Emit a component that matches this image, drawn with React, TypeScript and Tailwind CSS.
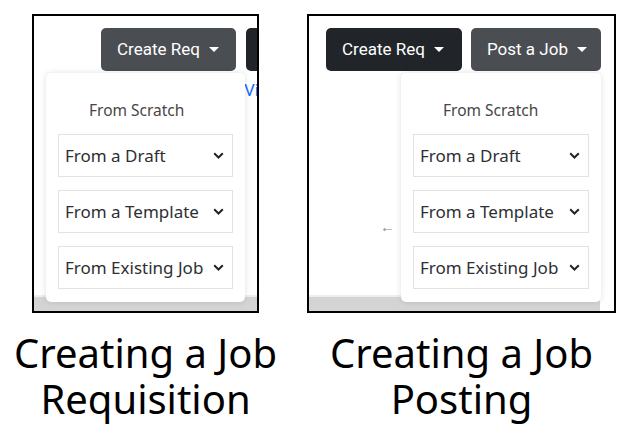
import React from "react";

const btnFont = { fontFamily: "Roboto, 'Liberation Sans', sans-serif" };
const bodyFont = { fontFamily: "'Noto Sans', Lato, sans-serif" };

function Caret() {
  return <span className="ml-[9px] inline-block h-0 w-0 border-x-[5px] border-t-[5px] border-x-transparent border-t-white" />;
}

function Chevron() {
  return (
    <svg width="11" height="7" viewBox="0 0 11 7" className="shrink-0">
      <path d="M1.2 1.2l4.3 4.3 4.3-4.3" fill="none" stroke="#212529" strokeWidth="2" />
    </svg>
  );
}

function MenuPanel({ textOffset }: { textOffset: string }) {
  const items = ["From a Draft", "From a Template", "From Existing Job"];
  return (
    <div className="flex h-[229px] flex-col rounded-[5px] bg-white px-[12px] shadow-[0_0_6px_rgba(0,0,0,0.12)]" style={bodyFont}>
      <div className={`h-[61px] pt-[28px] text-[15.5px] leading-[18px] text-[#4a4545] ${textOffset}`}>From Scratch</div>
      <div className="flex flex-col gap-[13px]">
        {items.map((item) => (
          <div
            key={item}
            className="flex h-[43px] items-center justify-between border border-[#e0e3e6] pl-[6px] pr-[8px] text-[17px] text-[#2d2f33]"
          >
            <span className="whitespace-nowrap">{item}</span>
            <Chevron />
          </div>
        ))}
      </div>
    </div>
  );
}

function BottomBand({ width }: { width: string }) {
  return (
    <div className={`mt-auto ${width}`}>
      <div className="h-[2px] bg-[#eceef0]" />
      <div className="h-[14px] bg-[#d4d4d4]" />
    </div>
  );
}

function Caption({ lines }: { lines: string[] }) {
  return (
    <div className="mt-[17px] whitespace-nowrap text-center text-[40px] leading-[46px] text-black" style={bodyFont}>
      {lines.map((l) => (
        <div key={l}>{l}</div>
      ))}
    </div>
  );
}

export default function App() {
  return (
    <div className="flex h-[439px] w-[630px] gap-[48px] bg-white pl-[32px] pt-[14px]">
      {/* left: requisition */}
      <div className="flex w-[227px] flex-col items-center">
        <div className="relative flex h-[299px] w-[227px] flex-col overflow-hidden border-2 border-black bg-white">
          <div className="flex gap-[10px] pl-[67px] pt-[12px]" style={btnFont}>
            <button className="flex h-[43px] w-[135px] shrink-0 items-center rounded-[5px] bg-[#4a4e52] pl-[16px] text-[17px] text-white">
              Create Req
              <Caret />
            </button>
            <button className="flex h-[43px] w-[130px] shrink-0 items-center rounded-[5px] bg-[#212529] pl-[16px] text-[17px] text-white">
              Post a Job
              <Caret />
            </button>
          </div>
          <div className="mt-[9px] whitespace-nowrap pl-[210px] text-[17px] leading-[20px] text-[#0d6efd]" style={btnFont}>
            View All
          </div>
          <BottomBand width="w-full" />
          <div className="absolute left-[12px] top-[57px] w-[199px]">
            <MenuPanel textOffset="pl-[31px]" />
          </div>
        </div>
        <Caption lines={["Creating a Job", "Requisition"]} />
      </div>

      {/* right: posting */}
      <div className="flex w-[309px] flex-col items-center">
        <div className="relative flex h-[299px] w-[309px] flex-col overflow-hidden border-2 border-black bg-white">
          <div className="flex gap-[9px] pl-[17px] pt-[12px]" style={btnFont}>
            <button className="flex h-[43px] w-[136px] shrink-0 items-center rounded-[5px] bg-[#212529] pl-[16px] text-[17px] text-white">
              Create Req
              <Caret />
            </button>
            <button className="flex h-[43px] w-[130px] shrink-0 items-center rounded-[5px] bg-[#4a4e52] pl-[16px] text-[17px] text-white">
              Post a Job
              <Caret />
            </button>
          </div>
          <div className="mt-[148px] pl-[71px] text-[15px] leading-[16px] text-[#8a8a8a]" style={btnFont}>
            ←
          </div>
          <BottomBand width="w-[291px]" />
          <div className="absolute left-[92px] top-[57px] w-[200px]">
            <MenuPanel textOffset="pl-[30px]" />
          </div>
        </div>
        <Caption lines={["Creating a Job", "Posting"]} />
      </div>
    </div>
  );
}
